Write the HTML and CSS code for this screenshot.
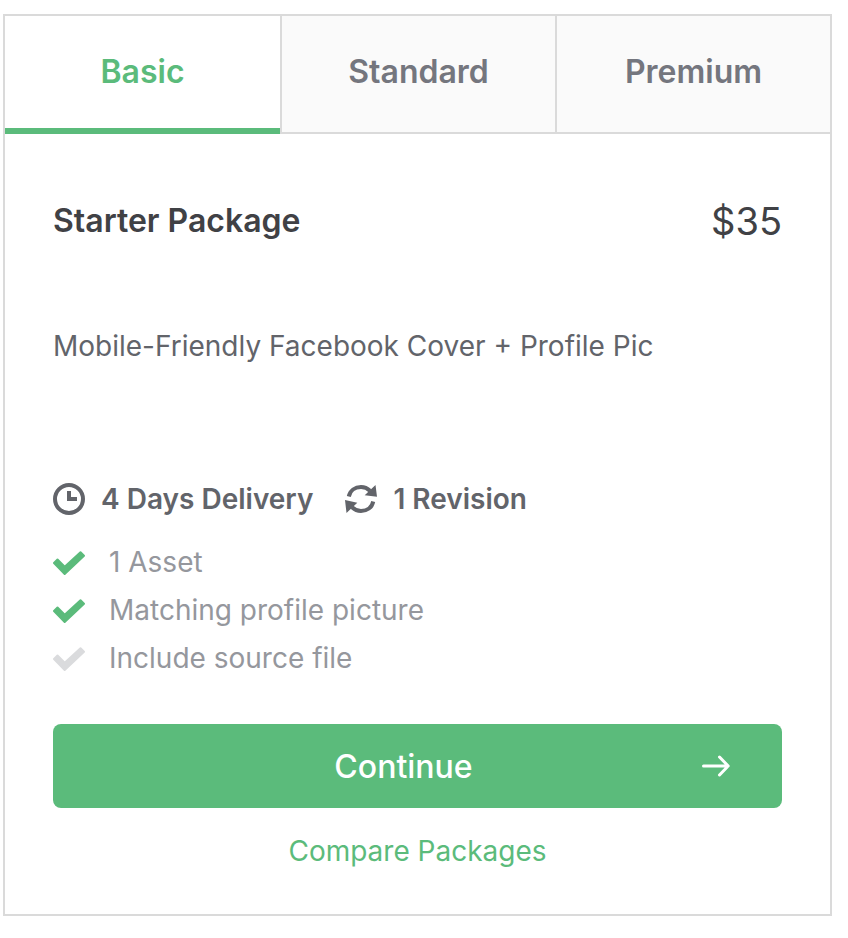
FILE: index.html
```html
<!DOCTYPE html>
<html lang="en">
    <head>
        <meta charset="UTF-8">
        <title>Packages</title>
        <link rel="stylesheet" href="styles.css">
    </head>
    <body>
        <main class="package-box">
            <div class="tabs" role="tablist">
                <button class="tab active" type="button" role="tab" aria-selected="true">Basic</button>
                <button class="tab" type="button" role="tab" aria-selected="false">Standard</button>
                <button class="tab" type="button" role="tab" aria-selected="false">Premium</button>
            </div>

            <div class="package" role="tabpanel">
                <div class="package-header">
                    <h1 class="package-title">Starter Package</h1>
                    <span class="price">$35</span>
                </div>

                <p class="description">Mobile-Friendly Facebook Cover + Profile Pic</p>

                <div class="extras">
                    <div class="extra">
                        <svg class="icon" viewBox="0 0 32 32" aria-hidden="true">
                            <circle cx="16" cy="16" r="14" fill="none" stroke="currentColor" stroke-width="4"/>
                            <path d="M14 8h4v6h6v4H14z" fill="currentColor"/>
                        </svg>
                        4 Days Delivery
                    </div>
                    <div class="extra">
                        <svg class="icon" viewBox="0 0 32 32" aria-hidden="true">
                            <path d="M3.8 13.5C5 7.5 10 4 16 4c3.500 0 6.500 1.300 9 3.700M28.200 18.500C27 24.500 22 28 16 28c-3.500 0-6.500-1.300-9-3.700" fill="none" stroke="currentColor" stroke-width="4"/>
                            <path d="M30.500 2L32 13.800l-12.300-1.500zM1.500 30L0 17l12.300 2.700z" fill="currentColor"/>
                        </svg>
                        1 Revision
                    </div>
                </div>

                <ul class="features">
                    <li class="feature included">
                        <svg class="icon" viewBox="0 0 32 32" aria-hidden="true">
                            <path d="M1 17L4.500 13.500 11.700 20.700 27.500 6.200 31 9.700 11.700 28z" fill="currentColor" stroke="currentColor" stroke-width="2" stroke-linejoin="round"/>
                        </svg>
                        <span>1 Asset</span>
                    </li>
                    <li class="feature included">
                        <svg class="icon" viewBox="0 0 32 32" aria-hidden="true">
                            <path d="M1 17L4.500 13.500 11.700 20.700 27.500 6.200 31 9.700 11.700 28z" fill="currentColor" stroke="currentColor" stroke-width="2" stroke-linejoin="round"/>
                        </svg>
                        <span>Matching profile picture</span>
                    </li>
                    <li class="feature">
                        <svg class="icon" viewBox="0 0 32 32" aria-hidden="true">
                            <path d="M1 17L4.500 13.500 11.700 20.700 27.500 6.200 31 9.700 11.700 28z" fill="currentColor" stroke="currentColor" stroke-width="2" stroke-linejoin="round"/>
                        </svg>
                        <span>Include source file</span>
                    </li>
                </ul>

                <button class="continue" type="button">
                    <span class="continue-label">Continue</span>
                    <svg class="arrow" viewBox="0 0 28 24" aria-hidden="true">
                        <path d="M1.500 12H26M17.500 3L26.200 12 17.500 21" fill="none" stroke="currentColor" stroke-width="3" stroke-linecap="round" stroke-linejoin="round"/>
                    </svg>
                </button>
                <a class="compare" href="#">Compare Packages</a>
            </div>
        </main>
    </body>
</html>
```
FILE: styles.css
```css
* {
    box-sizing: border-box;
}

body {
    font-family: 'Inter', 'Liberation Sans', sans-serif;
    font-size: 28px;
    line-height: 40px;
    margin: 14px 16px 22px 3px;
    background: white;
    color: #62646a;
}

.package-box {
    border: 2px solid #dadada;
}

.tabs {
    display: grid;
    grid-template-columns: repeat(3, 1fr);
}

.tab {
    height: 118px;
    padding: 0 0 6px;
    border: none;
    border-left: 2px solid #dadada;
    border-bottom: 2px solid #dadada;
    background: #fafafa;
    color: #74767e;
    font-family: inherit;
    font-size: 32px;
    font-weight: 600;
    cursor: pointer;
}

.tab.active {
    padding-bottom: 2px;
    border-left: none;
    border-bottom: 6px solid #5bbb7b;
    background: white;
    color: #5bbb7b;
}

.package {
    padding: 63px 48px 43px;
}

.package-header {
    display: flex;
    justify-content: space-between;
    align-items: center;
    height: 48px;
    color: #404145;
}

.package-title {
    margin: 0;
    font-size: 32px;
    font-weight: 600;
}

.price {
    font-size: 38px;
}

.description {
    min-height: 72px;
    margin: 81px 0;
}

.extras {
    display: flex;
    gap: 32px;
    font-weight: 600;
}

.extra {
    display: flex;
    align-items: center;
    gap: 16px;
}

.icon {
    flex: none;
    width: 32px;
    height: 32px;
}

.features {
    list-style: none;
    margin: 19px 0 42px;
    padding: 0;
}

.feature {
    display: flex;
    align-items: center;
    gap: 24px;
    height: 48px;
    color: #95979d;
}

.feature .icon {
    color: #dadbdd;
}

.feature.included .icon {
    color: #5bbb7b;
}

.continue {
    display: flex;
    align-items: center;
    width: 100%;
    height: 84px;
    padding: 0 52px;
    border: none;
    border-radius: 8px;
    background: #5bbb7b;
    color: white;
    font-family: inherit;
    font-size: 32px;
    font-weight: 500;
    cursor: pointer;
}

.continue-label {
    flex: 1;
}

.arrow {
    width: 28px;
    height: 24px;
}

.compare {
    display: block;
    margin-top: 23px;
    color: #5bbb7b;
    text-align: center;
    text-decoration: none;
}
```
